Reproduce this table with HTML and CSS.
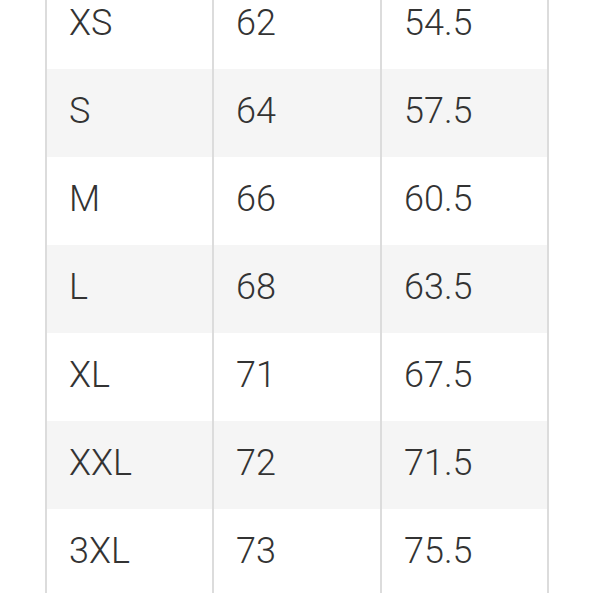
FILE: index.html
```html
<!DOCTYPE html>
<html>
<head>
<meta charset="utf-8">
<link rel="stylesheet" href="styles.css">
</head>
<body>
<div class="size-table">
  <div class="row"><div class="cell c1">XS</div><div class="cell c2">62</div><div class="cell c3">54.5</div></div>
  <div class="row alt"><div class="cell c1">S</div><div class="cell c2">64</div><div class="cell c3">57.5</div></div>
  <div class="row"><div class="cell c1">M</div><div class="cell c2">66</div><div class="cell c3">60.5</div></div>
  <div class="row alt"><div class="cell c1">L</div><div class="cell c2">68</div><div class="cell c3">63.5</div></div>
  <div class="row"><div class="cell c1">XL</div><div class="cell c2">71</div><div class="cell c3">67.5</div></div>
  <div class="row alt"><div class="cell c1">XXL</div><div class="cell c2">72</div><div class="cell c3">71.5</div></div>
  <div class="row"><div class="cell c1">3XL</div><div class="cell c2">73</div><div class="cell c3">75.5</div></div>
</div>
</body>
</html>
```
FILE: styles.css
```css
html, body {
  margin: 0;
  padding: 0;
  background: #ffffff;
  overflow: hidden;
}

.size-table {
  margin-top: -19px;
  margin-left: 45px;
  width: 504px;
  display: flex;
  flex-direction: column;
  font-family: Roboto, "Liberation Sans", sans-serif;
  font-weight: 300;
  font-size: 36px;
  color: #333333;
}

.row {
  display: grid;
  grid-template-columns: 167px 168px 169px;
  height: 88px;
}

.row.alt .cell {
  background: #f5f5f5;
}

.cell {
  border-left: 2px solid #dcdcdc;
  padding-left: 22px;
  padding-bottom: 3px;
  line-height: 85px;
  white-space: nowrap;
}

.cell.c3 {
  border-right: 2px solid #dcdcdc;
}
```
